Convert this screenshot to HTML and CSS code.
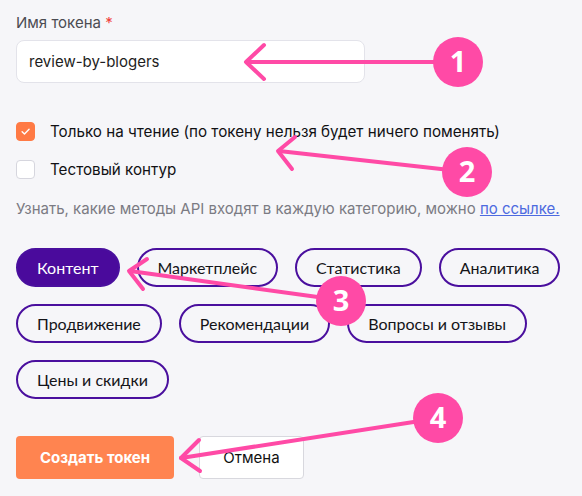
FILE: index.html
```html
<!DOCTYPE html>
<html lang="ru">
<head>
<meta charset="utf-8">
<link rel="stylesheet" href="styles.css">
</head>
<body>
<div class="page">
  <label class="field-label">Имя токена <span class="req">*</span></label>
  <div class="input">review-by-blogers</div>

  <div class="checks">
    <div class="check">
      <span class="box checked">
        <svg viewBox="0 0 20 20" width="20" height="20"><path d="M6 10.2l2.8 2.8L14.2 7.4" fill="none" stroke="#fff" stroke-width="1.6" stroke-linecap="round" stroke-linejoin="round"/></svg>
      </span>
      <span class="check-text">Только на чтение (по токену нельзя будет ничего поменять)</span>
    </div>
    <div class="check">
      <span class="box"></span>
      <span class="check-text">Тестовый контур</span>
    </div>
  </div>

  <p class="hint">Узнать, какие методы API входят в каждую категорию, можно <a href="#">по ссылке.</a></p>

  <div class="chips">
    <span class="chip active">Контент</span>
    <span class="chip">Маркетплейс</span>
    <span class="chip">Статистика</span>
    <span class="chip">Аналитика</span>
    <span class="chip">Продвижение</span>
    <span class="chip">Рекомендации</span>
    <span class="chip">Вопросы и отзывы</span>
    <span class="chip">Цены и скидки</span>
  </div>

  <div class="actions">
    <button class="btn primary">Создать токен</button>
    <button class="btn secondary">Отмена</button>
  </div>
</div>

<svg class="overlay" width="582" height="496" viewBox="0 0 582 496">
  <g stroke="#ff4aa6" stroke-width="4" stroke-linecap="round" stroke-linejoin="round" fill="none">
    <line x1="247" y1="62" x2="440" y2="62"/>
    <polyline points="264,45 246,62 264,79"/>
    <line x1="279" y1="151" x2="450" y2="170"/>
    <polyline points="295,137 278,151 292,169"/>
    <line x1="130" y1="271" x2="325" y2="298"/>
    <polyline points="147,259 129,271 143,289"/>
    <line x1="181" y1="458" x2="420" y2="421"/>
    <polyline points="199,440 181,458 200,471"/>
  </g>
  <g fill="#ff4aa6">
    <circle cx="458" cy="62" r="25"/>
    <circle cx="467" cy="172" r="25"/>
    <circle cx="341" cy="301" r="25"/>
    <circle cx="438" cy="418" r="25"/>
  </g>
  <g class="badge-num" fill="#fff" text-anchor="middle">
    <text x="458" y="72">1</text>
    <text x="467" y="182">2</text>
    <text x="341" y="311">3</text>
    <text x="438" y="428">4</text>
  </g>
</svg>
</body>
</html>
```

FILE: styles.css
```css
* { box-sizing: border-box; }
html, body { margin: 0; padding: 0; }
body {
  width: 582px;
  height: 496px;
  background: #f6f6f9;
  font-family: Inter, "Noto Sans", sans-serif;
  color: #1d1d21;
  position: relative;
  overflow: hidden;
}
.page {
  padding: 13px 16px 0 16px;
  display: flex;
  flex-direction: column;
}
.field-label {
  font-size: 15px;
  line-height: 20px;
  color: #4b4b52;
  height: 20px;
}
.req { color: #f0433b; }
.input {
  margin-top: 7px;
  width: 349px;
  height: 43px;
  background: #fff;
  border: 1px solid #e3e3ea;
  border-radius: 8px;
  padding: 0 12px;
  font-size: 15px;
  line-height: 41px;
  color: #1d1d21;
}
.checks {
  margin-top: 39px;
  display: flex;
  flex-direction: column;
  gap: 19px;
}
.check {
  display: flex;
  align-items: center;
  gap: 15px;
  height: 19px;
}
.box {
  width: 19px;
  height: 19px;
  border-radius: 4px;
  background: #fff;
  border: 1px solid #d6d6de;
  display: flex;
  align-items: center;
  justify-content: center;
  flex: none;
}
.box svg { width: 19px; height: 19px; }
.box.checked { background: #ff7a45; border-color: #ff7a45; }
.check-text { font-size: 15.2px; line-height: 19px; color: #111114; font-weight: 400; }
.hint {
  margin: 20px 0 0 0;
  font-size: 15px;
  line-height: 20px;
  color: #7b7b83;
  white-space: nowrap;
}
.hint a { color: #4d6ae0; text-decoration: underline; }
.chips {
  margin-top: 29px;
  display: flex;
  flex-wrap: wrap;
  column-gap: 17px;
  row-gap: 17px;
  width: 560px;
}
.chip {
  height: 39px;
  border: 2px solid #4a0f9e;
  border-radius: 20px;
  padding: 0 19px;
  display: flex;
  align-items: center;
  font-family: Lato, "Noto Sans", sans-serif;
  font-size: 16px;
  color: #141418;
  background: transparent;
  white-space: nowrap;
}
.chip.active {
  background: #4a0a9c;
  color: #fff;
}
.actions {
  margin-top: 37px;
  display: flex;
  gap: 25px;
}
.btn {
  height: 43px;
  border-radius: 4px;
  font-family: Inter, "Noto Sans", sans-serif;
  font-size: 15px;
  padding: 0;
}
.btn.primary {
  width: 158px;
  background: #ff8450;
  border: none;
  color: #fff;
  font-weight: 700;
}
.btn.secondary {
  width: 105px;
  background: #fff;
  border: 1px solid #d8d8de;
  color: #111;
  font-weight: 400;
}
.overlay {
  position: absolute;
  left: 0;
  top: 0;
  pointer-events: none;
}
.badge-num {
  font-family: "Open Sans", sans-serif;
  font-weight: 700;
  font-size: 29px;
}
```
